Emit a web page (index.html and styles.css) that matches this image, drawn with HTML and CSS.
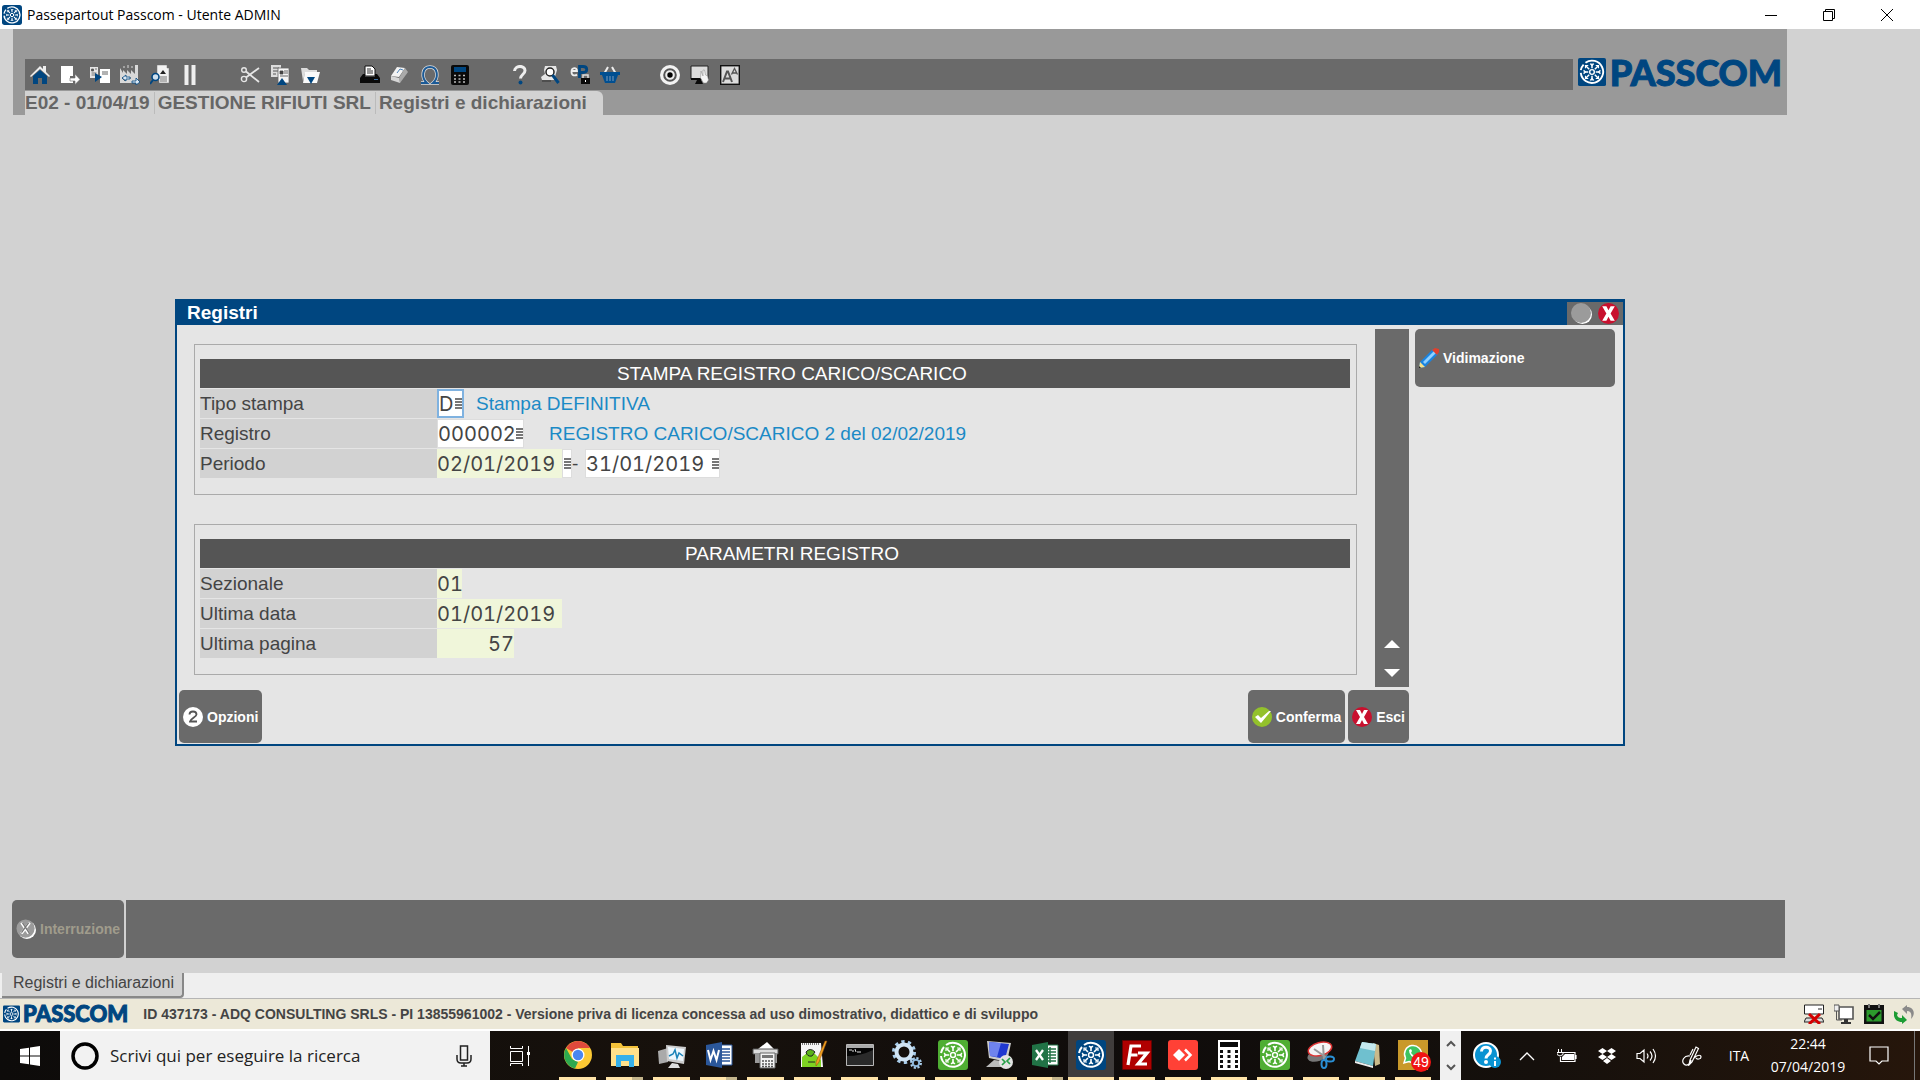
FILE: index.html
```html
<!DOCTYPE html>
<html lang="it">
<head>
    <meta charset="UTF-8">
    <meta name="viewport" content="width=device-width, initial-scale=1.0">
    <title>Passepartout Passcom - Utente ADMIN</title>
    <link rel="stylesheet" href="styles.css">
</head>
<body>
    <!-- shared icons -->
    <svg class="sprite" aria-hidden="true">
        <symbol id="wheel" viewBox="0 0 30 30">
            <g fill="none" stroke="#fff">
                <path d="M3 16a12 12 0 1 0 5-11" stroke-width="2"/>
                <path d="M3 13a12 12 0 0 1 3-6" stroke-width="2"/>
                <circle cx="15" cy="15" r="2.5" stroke-width="1.5"/>
                <path d="M15 11V6M15 19v5M11 15H6M19 15h5M12 12L8.500 8.500M18 18l3.500 3.500M18 12l3.500-3.500M12 18l-3.500 3.500" stroke-width="1.6"/>
                <path d="M13 6l2 2 2-2M13 24l2-2 2 2M6 13l2 2-2 2M24 13l-2 2 2 2M8 11V8h3M22 11V8h-3M8 19v3h3M22 19v3h-3" stroke-width="1.200"/>
            </g>
        </symbol>
        <symbol id="close-red" viewBox="0 0 20 20">
            <circle cx="10" cy="10" r="10" fill="#c8102e"/>
            <path d="M4 3h4l2 4 2-4h4l-4 7 4 7h-4l-2-4-2 4H4l4-7z" fill="#fff"/>
        </symbol>
        <symbol id="lines" viewBox="0 0 8 11">
            <path d="M1 1h7M1 4h7M1 7h7M1 10h7" stroke="#777" stroke-width="2"/>
        </symbol>
    </svg>

    <header class="titlebar">
        <svg class="app-icon" viewBox="0 0 30 30"><rect width="30" height="30" rx="4" fill="#004680"/><use href="#wheel"/></svg>
        <h1>Passepartout Passcom - Utente ADMIN</h1>
        <div class="window-buttons">
            <button aria-label="Riduci a icona"><svg width="12" height="12"><path d="M0 6.500h12" stroke="#000"/></svg></button>
            <button aria-label="Ripristina"><svg width="12" height="12" fill="none" stroke="#000"><path d="M.5 2.500h9v9h-9zM2.500 2.500v-2h9v9h-2"/></svg></button>
            <button aria-label="Chiudi"><svg width="12" height="12" stroke="#000"><path d="M0 0l12 12M12 0L0 12"/></svg></button>
        </div>
    </header>

    <main class="workspace">
        <div class="app-header">
            <div class="toolbar-row">
                <div class="toolbar">
                    <div class="tool-group">
                        <button aria-label="Home"><svg viewBox="0 0 20 20"><path d="M0 11L10 1l3 3V1h3v6l4 4-1 1-9-8-9 8z" fill="#eee"/><path d="M3 11l7-6 7 6v8h-5v-6H8v6H3z" fill="#004680"/></svg></button>
                        <button aria-label="Uscita"><svg viewBox="0 0 20 20"><path d="M1 1h12v10h-3v5h3v2H1z" fill="#fff"/><path d="M10 13h5v-4l5 5.500-5 5V16h-5z" fill="#fff" stroke="#6a6a6a" stroke-width=".6"/></svg></button>
                        <button aria-label="Cambio azienda"><svg viewBox="0 0 20 20"><path d="M0 2h8v11H0z" fill="#e6e6e6"/><path d="M1.500 4h2v2h-2zM5 4h2M1.500 8h5M1.500 10h5" fill="#555" stroke="#555" stroke-width=".8"/><path d="M10 4h10v14H10z" fill="#fff"/><path d="M12 7h6M12 9h6" stroke="#666"/><path d="M5 8l7 4-7 5z" fill="#004680"/></svg></button>
                        <button aria-label="Produzione"><svg viewBox="0 0 20 20"><path d="M0 18V3l3 5V5l4 4V5l4 4V5l4 4V0h3v18z" fill="#d9d9d9"/><path d="M4 3V1M8 3V0M12 3V1" stroke="#d9d9d9"/><path d="M2 13h3v3M8 13h3" stroke="#666"/><path d="M12 16h4v-3l4 4-4 3v-2h-4zM10 12H6v-2l-4 3 4 3v-2h4z" fill="#dce8f4" stroke="#004680" stroke-width=".8"/></svg></button>
                        <button aria-label="Anteprima"><svg viewBox="0 0 20 20"><path d="M7 0h10v3h2v15H9v-3H7z" fill="#f2f2f2" stroke="#777" stroke-width=".5"/><path d="M10 9l3-4 3 4z" fill="#222"/><path d="M10 12h7M10 14h7M10 16h7" stroke="#777"/><circle cx="5.500" cy="12" r="3.500" fill="#cfe0ee" stroke="#004680" stroke-width="1.600"/><path d="M3 15l-3 4" stroke="#004680" stroke-width="2"/></svg></button>
                        <button aria-label="Pausa"><svg viewBox="0 0 20 20"><path d="M4.500 0h4v20h-4zM11.500 0h4v20h-4z" fill="#eee"/></svg></button>
                    </div>
                    <div class="tool-group">
                        <button aria-label="Taglia"><svg viewBox="0 0 20 20" fill="none" stroke="#e6e6e6"><circle cx="4" cy="5" r="2.300" stroke-width="1.400"/><circle cx="4" cy="14" r="2.600" stroke-width="1.400"/><path d="M6 12.500L19 3M6 6.500L19 17" stroke-width="1.800"/></svg></button>
                        <button aria-label="Copia"><svg viewBox="0 0 20 20"><path d="M1 0h10v12H1z" fill="#ddd"/><path d="M3 3h6M3 6h6M3 9h3" stroke="#555"/><path d="M8 3h11v15H8z" fill="#f6f6f6" stroke="#666" stroke-width=".8"/><path d="M10 6h3v3h-3zM14 6h4M14 8h4M10 11h8" fill="#444" stroke="#444" stroke-width=".8"/><path d="M7 20l5-7 5 7z" fill="#004680"/></svg></button>
                        <button aria-label="Incolla"><svg viewBox="0 0 20 20"><path d="M1 3h6l2 2h8v3H5l-2 8z" fill="#ddd"/><path d="M5 7h15l-3 11H3z" fill="#fafafa"/><path d="M7 12h8l-4 7z" fill="#004680"/></svg></button>
                    </div>
                    <div class="tool-group">
                        <button aria-label="Stampa"><svg viewBox="0 0 20 20"><path d="M5 1h7l3 3v7H5z" fill="#fff" stroke="#111"/><path d="M7 4h4M7 6h6M7 8h6" stroke="#333"/><path d="M3 9h2v3h10V9h2l3 4v5H0v-5z" fill="#0a0a0a"/><path d="M14 14h4v1h-4z" fill="#3c6ea0"/></svg></button>
                        <button aria-label="Cancella"><svg viewBox="0 0 20 20"><path d="M7 2l8 1-6 9-8-1z" fill="#f3f3f3"/><path d="M15 3l3 4-8 11-1-5z" fill="#aaa"/><path d="M1 11l8 2 1 5-9-3z" fill="#d6d6d6"/><path d="M7 8l3-4 3 1" stroke="#4d83b8" fill="none"/></svg></button>
                        <button aria-label="Simboli"><svg viewBox="0 0 20 20"><path d="M1 18h6c-6-5-5-16 3-16s9 11 3 16h6" fill="none" stroke="#ddd" stroke-width="3.500"/><path d="M1 18h6c-6-5-5-16 3-16s9 11 3 16h6" fill="none" stroke="#1b5a96" stroke-width="2"/></svg></button>
                        <button aria-label="Calcolatrice"><svg viewBox="0 0 20 20"><rect x="1" width="18" height="20" rx="2" fill="#0a0a0a"/><path d="M4 2h12v5H4z" fill="#004680"/><path d="M4 10.500h12M4 14h12M4 17h12" stroke="#bbb" stroke-width="1.500" stroke-dasharray="2 2.500"/></svg></button>
                    </div>
                    <div class="tool-group">
                        <button aria-label="Aiuto"><svg viewBox="0 0 20 20"><path d="M4.500 6C5 0 15 0 15 5.500c0 4-4.500 4-4.500 8" fill="none" stroke="#eee" stroke-width="3"/><circle cx="10.500" cy="17.500" r="2" fill="#004680"/></svg></button>
                        <button aria-label="Ricerca"><svg viewBox="0 0 20 20"><path d="M5 1h11l1 4-3 10H2l-1-3 4-3-1-4z" fill="#e6e6e6"/><circle cx="10" cy="7" r="4" fill="#fff" stroke="#222" stroke-width="1.500"/><path d="M2 16h9" stroke="#333"/><path d="M12.500 10l6 8" stroke="#004680" stroke-width="3"/></svg></button>
                        <button aria-label="ePass"><svg viewBox="0 0 20 20"><path d="M1.500 6h5.500c0-4-5.500-4-5.500 1 0 4 4 4 5.500 2.500" fill="none" stroke="#eee" stroke-width="1.800"/><path d="M9.500 13V1.500H13c5 0 5 6 0 6H10" fill="none" stroke="#004680" stroke-width="2.800"/><rect x="11" y="13" width="9" height="6" fill="#0a0a0a"/><path d="M13 13v-3h5v3" fill="none" stroke="#ddd" stroke-width="1.500"/><path d="M15 15h1v2h-1z" fill="#fff"/></svg></button>
                        <button aria-label="Acquisti"><svg viewBox="0 0 20 20"><path d="M4 9l4-7M16 9l-4-7" stroke="#eee" stroke-width="2"/><path d="M0 7h20v3h-2l-3 8H5l-3-8H0z" fill="#004f91"/><path d="M7 11v5M10 11v5M13 11v5" stroke="#7f9cba"/></svg></button>
                    </div>
                    <div class="tool-group">
                        <button aria-label="Bersaglio"><svg viewBox="0 0 20 20"><circle cx="10" cy="10" r="10" fill="#f2f2f2"/><circle cx="10" cy="10" r="5.800" fill="#eee" stroke="#555" stroke-width="2"/><circle cx="10" cy="10" r="2.700" fill="#000"/></svg></button>
                        <button aria-label="Desktop"><svg viewBox="0 0 20 20"><path d="M1 1h17v13H1z" fill="#ddd" stroke="#222"/><path d="M1 13h12v2H1zM7 15h4l2 4H5z" fill="#0a0a0a"/><path d="M11 6l2 5V5h1.500l1 5 2 1 1 4-2 3h-3l-3-5z" fill="#f4f4f4" stroke="#888" stroke-width=".5"/></svg></button>
                        <button aria-label="Caratteri"><svg viewBox="0 0 20 20"><rect x=".7" y=".7" width="18.600" height="18.600" fill="#ddd" stroke="#111" stroke-width="1.400"/><path d="M3 17L7 6.500h1L12 17M4.500 13.500h6" fill="none" stroke="#555" stroke-width="2"/><path d="M11.500 9.500l3-6 3 6M12.500 8h4" fill="none" stroke="#555" stroke-width="1.300"/></svg></button>
                    </div>
                </div>
                <div class="brand">
                    <svg viewBox="0 0 30 30"><rect width="30" height="30" rx="2" fill="#004680"/><use href="#wheel"/></svg>
                    <span>PASSCOM</span>
                </div>
            </div>
            <nav class="breadcrumb">
                <span>E02 - 01/04/19</span>
                <span>GESTIONE RIFIUTI SRL</span>
                <span>Registri e dichiarazioni</span>
            </nav>
        </div>

        <section class="dialog">
            <div class="dialog-title">
                <h2>Registri</h2>
                <div class="dialog-buttons">
                    <button aria-label="Riduci"><svg viewBox="0 0 22 22"><circle cx="12" cy="12" r="10" fill="#fff"/><circle cx="10.500" cy="10.500" r="10.500" fill="#9b9b9b"/></svg></button>
                    <button aria-label="Chiudi"><svg viewBox="0 0 20 20"><use href="#close-red"/></svg></button>
                </div>
            </div>
            <div class="dialog-body">
                <form class="dialog-main">
                    <div class="form-area">
                        <div class="panels">
                            <div class="panel">
                                <h3>STAMPA REGISTRO CARICO/SCARICO</h3>
                                <div class="row">
                                    <label for="tipo">Tipo stampa</label>
                                    <div class="field active"><input id="tipo" class="w-1" value="D"><svg class="menu"><use href="#lines"/></svg></div>
                                    <span class="note">Stampa DEFINITIVA</span>
                                </div>
                                <div class="row">
                                    <label for="registro">Registro</label>
                                    <div class="field"><input id="registro" class="w-6" value="000002"><svg class="menu"><use href="#lines"/></svg></div>
                                    <span class="note wide">REGISTRO CARICO/SCARICO 2 del 02/02/2019</span>
                                </div>
                                <div class="row">
                                    <label for="dal">Periodo</label>
                                    <input id="dal" class="w-10 locked" value="02/01/2019" readonly>
                                    <div class="field"><svg class="menu"><use href="#lines"/></svg></div>
                                    <label class="dash" for="al">-</label>
                                    <div class="field"><input id="al" class="w-10" value="31/01/2019"><svg class="menu"><use href="#lines"/></svg></div>
                                </div>
                            </div>
                            <div class="panel">
                                <h3>PARAMETRI REGISTRO</h3>
                                <div class="row">
                                    <label for="sezionale">Sezionale</label>
                                    <input id="sezionale" class="w-2 locked" value="01" readonly>
                                </div>
                                <div class="row">
                                    <label for="ultima-data">Ultima data</label>
                                    <input id="ultima-data" class="w-10 locked" value="01/01/2019" readonly>
                                </div>
                                <div class="row">
                                    <label for="ultima-pagina">Ultima pagina</label>
                                    <input id="ultima-pagina" class="w-6 locked number" value="57" readonly>
                                </div>
                            </div>
                        </div>
                        <div class="scroller">
                            <button type="button" aria-label="Su"><svg width="16" height="8"><path d="M0 8l8-8 8 8z" fill="#fff"/></svg></button>
                            <button type="button" aria-label="Giù"><svg width="16" height="8"><path d="M0 0h16l-8 8z" fill="#fff"/></svg></button>
                        </div>
                    </div>
                    <div class="actions">
                        <button type="button" class="btn"><svg viewBox="0 0 20 20"><circle cx="10" cy="10" r="10" fill="#fff"/><path d="M6.500 7.500c0-4 7-4 7 0 0 2.500-6 4-6.500 7h7" fill="none" stroke="#555" stroke-width="1.800"/></svg>Opzioni</button>
                        <button type="button" class="btn confirm"><svg viewBox="0 0 20 20"><circle cx="10" cy="10" r="10" fill="#93c12c"/><path d="M3 10l3-2 3 3 8-7h2L9 16z" fill="#fff"/></svg>Conferma</button>
                        <button type="button" class="btn"><svg viewBox="0 0 20 20"><use href="#close-red"/></svg>Esci</button>
                    </div>
                </form>
                <aside class="side">
                    <button class="btn"><svg viewBox="0 0 20 20"><path d="M0 20l1-6L14 1l5 5L6 19z" fill="#1a84e0"/><path d="M4 14L15 3l2 2L6 16z" fill="#8fd0ff"/><path d="M0 20l1-6 5 5z" fill="#f7e08a"/><path d="M0 20v-2l2 2z" fill="#222"/><path d="M13 2l3-2 4 1v3l-2 3z" fill="#e0402c"/></svg>Vidimazione</button>
                </aside>
            </div>
        </section>

        <div class="command-bar">
            <button class="btn" disabled><svg viewBox="0 0 22 22"><circle cx="12" cy="12" r="10" fill="#fff"/><circle cx="10.500" cy="10.500" r="10" fill="#9b9b9b"/><path d="M6 4l8 12M15 4L6 16" stroke="#fff" stroke-width="3"/><path d="M7 4l8 12M14 4L6 15" stroke="#777" stroke-width="1.500"/></svg>Interruzione</button>
            <div class="command-fill"></div>
        </div>
    </main>

    <div class="window-tabs">
        <a href="#" class="window-tab">Registri e dichiarazioni</a>
    </div>

    <div class="status-bar">
        <div class="brand small">
            <svg viewBox="0 0 30 30"><rect width="30" height="30" rx="2" fill="#004680"/><use href="#wheel"/></svg>
            <span>PASSCOM</span>
        </div>
        <p>ID 437173 - ADQ CONSULTING SRLS - PI 13855961002 - Versione priva di licenza concessa ad uso dimostrativo, didattico e di sviluppo</p>
        <div class="status-icons">
            <svg viewBox="0 0 20 20"><path d="M.5 1h19v9H.5z" fill="#fff" stroke="#222"/><path d="M14 5h4M2 14h16l2 4H0z" stroke="#222" fill="#ddd"/><path d="M5 10l11 10M16 10L5 20" stroke="#d40000" stroke-width="3"/></svg>
            <svg viewBox="0 0 20 20"><path d="M5 3h14v12H5z" fill="#fff" stroke="#555" stroke-width="1.600"/><path d="M0 1h5v6H0z" fill="#eee" stroke="#555"/><path d="M2.500 7v9H8" fill="none" stroke="#555"/><path d="M10 15h4v3h3v2H7v-2h3z" fill="#333"/></svg>
            <svg viewBox="0 0 20 20"><rect y="1" width="20" height="19" fill="#111"/><rect x="2.500" y="6" width="15" height="11.500" fill="#2c9a2c"/><path d="M5 0v4M15 0v4" stroke="#777" stroke-width="2"/><path d="M5 11l4 4 7-7" fill="none" stroke="#111" stroke-width="2.500"/></svg>
            <svg viewBox="0 0 20 20"><path d="M0 7l4 2-1 2c1 3 3 3 5 3v-3l5 5-5 4v-2c-6 0-9-4-8-11z" fill="#1c9c33"/><path d="M17 15c1-5 0-8-4-8v3L8 5l5-4v2c7 0 9 7 4 12z" fill="#8a8a8a"/></svg>
        </div>
    </div>

    <footer class="taskbar">
        <button class="start" aria-label="Start"><svg width="20" height="20"><path d="M0 3l9-1.300V9.500H0zM10 1.500L20 0v9.500H10zM0 10.500h9v7.800L0 17zM10 10.500h10V20l-10-1.500z" fill="#fff"/></svg></button>
        <div class="search">
            <svg width="28" height="28"><circle cx="14" cy="14" r="12" fill="none" stroke="#000" stroke-width="3.500"/></svg>
            <input type="text" aria-label="Ricerca" placeholder="Scrivi qui per eseguire la ricerca">
            <svg width="16" height="22" fill="none" stroke="#222" stroke-width="1.500"><rect x="4.500" y="1" width="7" height="14"/><path d="M1 10v4q0 4 4 4h6q4 0 4-4v-4M8 18v3M5 21h6"/></svg>
        </div>
        <button class="task-view" aria-label="Visualizzazione attività"><svg width="22" height="20" fill="none" stroke="#fff"><path d="M1.500 5.500h12v10h-12zM1.500 0v2.500h12V0M1.500 20v-2.500h12V20M19.500 0v20"/><path d="M18 6h3v3h-3z" fill="#fff" stroke="none"/></svg></button>

        <div class="apps">
            <button aria-label="Chrome"><svg viewBox="0 0 30 30"><circle cx="15" cy="15" r="14" fill="#fcc934"/><path d="M15 15L3 8a14 14 0 0 1 24.200 0H15z" fill="#e04a3c"/><path d="M3 8l6 11 6 3-3 6.600A14 14 0 0 1 3 8z" fill="#2da94f"/><circle cx="15" cy="15" r="6.500" fill="#fff"/><circle cx="15" cy="15" r="5.200" fill="#4a86f0"/></svg></button>
            <button class="multi" aria-label="Esplora file"><svg viewBox="0 0 30 30"><path d="M1 3h10l2 3h15v20H1z" fill="#f3c23a"/><path d="M1 8h28v18H1z" fill="#ffe18b"/><path d="M6 27V15h18v12h-5v-6h-8v6z" fill="#35b0ea"/></svg></button>
            <button aria-label="Monitor di sistema"><svg viewBox="0 0 30 30"><path d="M1 11l10-3v14l-9 2z" fill="#aaa"/><path d="M9 5l20 2-2 17-17-3z" fill="#ccc"/><path d="M11 7l16 2-1 12-14-2z" fill="#eef7fd"/><path d="M12 16l4-2 2-4 2 8 2-5 4 3" fill="none" stroke="#1b83b9" stroke-width="1.500"/><path d="M15 23l6 1 2 4H11z" fill="#ddd"/></svg></button>
            <button class="multi" aria-label="Word"><svg viewBox="0 0 30 30"><path d="M14 5h14v20H14z" fill="#fff" stroke="#2b579a"/><path d="M17 9h9M17 12h9M17 15h9M17 18h9M17 21h9" stroke="#2b579a" stroke-width="1.300"/><path d="M2 5l16-3v26L2 25z" fill="#2b579a"/><path d="M4 10l2.500 10L9.500 11l3 9L15 10" fill="none" stroke="#fff" stroke-width="2"/></svg></button>
            <button aria-label="Contabilità"><svg viewBox="0 0 30 30"><path d="M7 9l9-7 8 8z" fill="#fff"/><path d="M2 9h25v5H2z" fill="#ddd" stroke="#555"/><path d="M4 14h22v9H4z" fill="#999"/><path d="M9 13h15v15H9z" fill="#f4f4f4" stroke="#666"/><path d="M11 15h11v3H11z" fill="#777"/><path d="M11 21h11M11 24h11M11 26.500h11" stroke="#555" stroke-width="1.500" stroke-dasharray="2 1"/></svg></button>
            <button aria-label="Notepad++"><svg viewBox="0 0 30 30"><path d="M3 3h20l2 24H3z" fill="#f5f5f5"/><path d="M4 4h18" stroke="#777" stroke-width="2" stroke-dasharray="1 1"/><path d="M4 17l5-4 8 1 6 6v7H4z" fill="#7ed321"/><path d="M8 12q4-5 9 0l-3 4q-5 1-6-4zM10 22h7" fill="#5bb31a" stroke="#222"/><path d="M29 1L21 22l-3 4v-4L27 1z" fill="#f0a020" stroke="#8a4a10" stroke-width=".5"/></svg></button>
            <button aria-label="Prompt dei comandi"><svg viewBox="0 0 30 30"><path d="M1.500 4.500h27v21h-27z" fill="#050505" stroke="#b8b8b8"/><path d="M2 5h26v3H2z" fill="#aaa"/><path d="M4 10h3M8 10v2M10 9l1 3M12 12h4" stroke="#ddd"/><path d="M2 25V16q14 0 26-6v15z" fill="#2a2a2a"/></svg></button>
            <button aria-label="Servizi"><svg viewBox="0 0 30 30" fill="none"><circle cx="12" cy="12" r="9.500" stroke="#a9cdea" stroke-width="5" stroke-dasharray="3 3"/><circle cx="12" cy="12" r="7.500" stroke="#cfe3f3" stroke-width="4"/><circle cx="24" cy="23" r="4.500" stroke="#a9cdea" stroke-width="3" stroke-dasharray="2 1.500"/><circle cx="24" cy="23" r="3.200" stroke="#8db7da" stroke-width="2"/></svg></button>
            <button aria-label="Passepartout"><svg viewBox="0 0 30 30"><rect width="30" height="30" rx="3" fill="#4fae33"/><use href="#wheel"/></svg></button>
            <button aria-label="Desktop remoto"><svg viewBox="0 0 30 30"><path d="M3 1l24 2-4 19L5 18z" fill="#ccc"/><path d="M5 2l20 2-4 15L6 16z" fill="#1f38d0"/><path d="M5 2l12 1-4 14-7-1z" fill="#6f83ee"/><path d="M10 20l8 1 2 6H2z" fill="#bbb"/><circle cx="22" cy="22" r="7" fill="#e3e3e3"/><path d="M18 19l3 3-3 3M26 18l-3 3 3 3" fill="none" stroke="#27a048" stroke-width="1.700"/></svg></button>
            <button class="multi" aria-label="Excel"><svg viewBox="0 0 30 30"><path d="M14 5h14v20H14z" fill="#fff" stroke="#217346"/><path d="M20 7v16M17 9h9M17 12h9M17 15h9M17 18h9M17 21h9" stroke="#217346" stroke-width="1.500"/><path d="M2 5l16-3v26L2 25z" fill="#217346"/><path d="M6 10l7 10M13 10L6 20" stroke="#fff" stroke-width="2.300"/></svg></button>
            <button class="current" aria-label="Passcom"><svg viewBox="0 0 30 30"><rect width="30" height="30" rx="3" fill="#004680"/><use href="#wheel"/></svg></button>
            <button aria-label="FileZilla"><svg viewBox="0 0 30 30"><rect x=".5" y=".5" width="29" height="29" fill="#b00000" stroke="#600" stroke-dasharray="2 1"/><path d="M6 25L9 6h10M7.500 15h8M16 13h9l-9 11h9" fill="none" stroke="#fff" stroke-width="3.200"/></svg></button>
            <button aria-label="AnyDesk"><svg viewBox="0 0 30 30"><rect width="30" height="30" rx="3" fill="#ff4136"/><path d="M11 9l6 6-6 6-6-6z" fill="#fff"/><path d="M17 9.500l5.500 5.500-5.500 5.500" fill="none" stroke="#fff" stroke-width="2.500"/></svg></button>
            <button aria-label="Calcolatrice"><svg viewBox="0 0 30 30"><path d="M4 0h22v30H4z" fill="#fff"/><path d="M6 2h18v5H6z" fill="#0a0a0a"/><path d="M6 11.500h18M6 16.500h18M6 21.500h18M6 26.500h18" stroke="#111" stroke-width="3" stroke-dasharray="3 4.500"/></svg></button>
            <button aria-label="Passepartout 2"><svg viewBox="0 0 30 30"><rect width="30" height="30" rx="3" fill="#4fae33"/><use href="#wheel"/></svg></button>
            <button aria-label="Strumento di cattura"><svg viewBox="0 0 30 30"><ellipse cx="12" cy="15" rx="11" ry="6" fill="#777" transform="rotate(-20 12 15)"/><ellipse cx="14" cy="9" rx="12" ry="6.500" fill="#f4f4f4" stroke="#d33" stroke-width="1.500" transform="rotate(-15 14 9)"/><path d="M8 9l13 9M17 5l1 15" stroke="#999" stroke-width="2"/><ellipse cx="24" cy="19" rx="4" ry="2.500" fill="none" stroke="#2a8fd4" stroke-width="2"/><ellipse cx="18" cy="24" rx="2.500" ry="4" fill="none" stroke="#2a8fd4" stroke-width="2"/></svg></button>
            <button aria-label="Blocco note"><svg viewBox="0 0 30 30"><path d="M21 3l6 2 1 19-5 2z" fill="#c9b98a"/><path d="M10 2l14 2-3 22-18-5z" fill="#6fc0cf"/><path d="M10 2l14 2-1 7-15-3z" fill="#c4e9ef"/><path d="M3 21l18 5v2L3 23z" fill="#eee"/></svg></button>
            <button aria-label="WhatsApp"><svg viewBox="0 0 30 30"><rect width="30" height="30" fill="#c9992a"/><path d="M6 23l1.500-5A8.500 8.500 0 1 1 11 21.500z" fill="#3fc35f" stroke="#fff" stroke-width="1.500"/><path d="M11 10q0 7 8 8l1-2-3-1-1 1-3-3 1-2-1-2z" fill="#fff"/></svg><span class="badge">49</span></button>
        </div>

        <div class="app-scroll">
            <button aria-label="Scorri su"><svg width="10" height="7" fill="none" stroke="#555" stroke-width="2"><path d="M1 6l4-4 4 4"/></svg></button>
            <button aria-label="Scorri giù"><svg width="10" height="7" fill="none" stroke="#555" stroke-width="2"><path d="M1 1l4 4 4-4"/></svg></button>
        </div>

        <div class="tray">
            <button class="tray-wide" aria-label="Assistenza"><svg width="30" height="28"><circle cx="14" cy="13" r="12" fill="#0a93d2" stroke="#fff" stroke-width="2"/><path d="M9.500 9.500c0-6 9-5.500 9-.5 0 4-4.500 3.500-4.500 7.500" fill="none" stroke="#fff" stroke-width="3"/><circle cx="14" cy="20" r="2" fill="#fff"/><circle cx="23" cy="20" r="6" fill="#0a93d2"/><path d="M23 19v5M23 15.500v2" stroke="#fff" stroke-width="2"/></svg></button>
            <button class="tray-slim" aria-label="Icone nascoste"><svg width="16" height="10" fill="none" stroke="#fff" stroke-width="1.300"><path d="M1 9l7-7 7 7"/></svg></button>
            <button class="tray-wide" aria-label="Batteria"><svg width="20" height="14" fill="none" stroke="#fff"><path d="M6 3.500h12v9H3.500V8M19 6v4" stroke-width="1.200"/><path d="M8 5h9v6H5V8z" fill="#fff" stroke="none"/><path d="M1.500 0v3M4.500 0v3M0 3.500h6v2L3 7 0 5.500z"/></svg></button>
            <button class="tray-slim" aria-label="Dropbox"><svg width="18" height="16" fill="#fff"><path d="M4.500 0L9 3 4.500 6 0 3zM13.500 0L18 3l-4.500 3L9 3zM4.500 6L9 9l-4.500 3L0 9zM13.500 6L18 9l-4.500 3L9 9zM9 10l4 3-4 3-4-3z"/></svg></button>
            <button class="tray-wide" aria-label="Volume"><svg width="22" height="16" fill="none" stroke="#fff" stroke-width="1.200"><path d="M1 5.500h3L8 2v12l-4-3.500H1zM11 5.500q2 2.500 0 5M14 3.500q4 4.500 0 9M17 1q5 7 0 14"/></svg></button>
            <button class="tray-pen" aria-label="Penna"><svg width="20" height="20" fill="none" stroke="#fff" stroke-width="1.200"><path d="M8 14L14 1l2.500 1.500L10 16l-3 3zM8 10C2 9-1 15 2 18s7-1 7-4M12 12c4-4 7-3 7-1s-4 3-5 1M11 3l-3 6"/></svg></button>
            <button class="tray-lang">ITA</button>
            <button class="clock"><time>22:44</time><time>07/04/2019</time></button>
            <button class="tray-notes" aria-label="Notifiche"><svg width="20" height="20" fill="none" stroke="#fff" stroke-width="1.200"><path d="M1 1h18v14h-6l-3 3-3-3H1z"/></svg></button>
        </div>
    </footer>
</body>
</html>
```

FILE: styles.css
```css
:root {
    --blue: #004680;
    --page-bg: #d2d2d2;
    --bar-bg: #6a6a6a;
    --dialog-bg: #e5e5e5;
    --header-bg: #999999;
    --locked-bg: #f0f6da;
    --note-color: #1b8ac6;
}

* {
    box-sizing: border-box;
    margin: 0;
    padding: 0;
}

body {
    display: flex;
    flex-direction: column;
    min-height: 100vh;
    background-color: var(--page-bg);
    font-family: "Liberation Sans", Arial, sans-serif;
    font-size: 19px;
    color: #444;
}

button {
    border: none;
    background: none;
    font-family: inherit;
    color: inherit;
    cursor: pointer;
}

svg {
    display: block;
    flex: none;
}

.sprite {
    position: absolute;
    width: 0;
    height: 0;
}

/* window title */
.titlebar {
    display: flex;
    align-items: center;
    height: 29px;
    padding-left: 2px;
    background-color: #fff;
}

.app-icon {
    width: 20px;
    height: 20px;
}

.titlebar h1 {
    flex: 1;
    margin-left: 5px;
    font-family: "Open Sans", sans-serif;
    font-size: 14px;
    font-weight: 400;
    color: #000;
}

.window-buttons {
    display: flex;
    padding-right: 4px;
}

.window-buttons button {
    display: grid;
    place-items: center;
    width: 58px;
    height: 28px;
}

.workspace {
    display: flex;
    flex: 1;
    flex-direction: column;
}

/* header and toolbar */
.app-header {
    margin: 0 133px 0 13px;
    padding: 30px 0 0 12px;
    background-color: var(--header-bg);
}

.toolbar-row {
    display: flex;
    height: 31px;
}

.toolbar {
    display: flex;
    flex: 1;
    align-items: center;
    gap: 30px;
    background-color: var(--bar-bg);
}

.tool-group {
    display: flex;
}

.tool-group button {
    display: grid;
    place-items: center;
    width: 30px;
    height: 30px;
}

.tool-group svg {
    width: 20px;
    height: 20px;
}

.brand {
    display: flex;
    align-items: center;
    gap: 4px;
    height: 26px;
    padding: 0 5px;
    color: var(--blue);
    font-family: Lato, sans-serif;
    font-size: 36px;
    font-weight: 900;
    line-height: 26px;
    -webkit-text-stroke: 1px var(--blue);
}

.brand svg {
    width: 28px;
    height: 28px;
}

.breadcrumb {
    display: flex;
    align-items: center;
    width: max-content;
    height: 24px;
    margin-top: 1px;
    padding-right: 16px;
    border-top-right-radius: 6px;
    background-color: var(--page-bg);
    font-weight: bold;
    line-height: 22px;
    color: #666;
}

.breadcrumb span + span {
    margin-left: 4px;
    padding-left: 3px;
    border-left: 1px solid #bbb;
}

/* dialog */
.dialog {
    margin: 184px 295px 20px 175px;
    border: 2px solid var(--blue);
    background-color: var(--dialog-bg);
}

.dialog-title {
    display: flex;
    align-items: center;
    justify-content: space-between;
    height: 24px;
    padding-left: 10px;
    background-color: var(--blue);
    color: #fff;
}

.dialog-title h2 {
    font-size: 19px;
    line-height: 22px;
}

.dialog-buttons {
    display: flex;
    gap: 6px;
    padding: 1px 4px;
    background-color: var(--bar-bg);
}

.dialog-buttons svg {
    width: 21px;
    height: 21px;
}

.dialog-body {
    display: flex;
    gap: 6px;
    padding: 4px 8px 1px 0;
}

.dialog-main {
    flex: 1;
}

.form-area {
    display: flex;
    gap: 18px;
    padding-left: 17px;
}

.panels {
    flex: 1;
    padding: 15px 0 12px;
}

.panel {
    padding: 14px 6px 16px 5px;
    border: 1px solid #aaa;
}

.panel + .panel {
    margin-top: 29px;
}

.panel h3 {
    height: 29px;
    padding-left: 34px;
    background-color: #555;
    color: #fff;
    font-size: 19px;
    font-weight: 400;
    line-height: 29px;
    text-align: center;
}

.row {
    display: flex;
    align-items: center;
    height: 29px;
    margin-top: 1px;
    line-height: 29px;
}

.row label {
    width: 237px;
    background-color: var(--page-bg);
}

.row .dash {
    width: 13px;
    background: none;
}

.row input {
    height: 27px;
    border: none;
    outline: none;
    background-color: transparent;
    font-family: Inter, sans-serif;
    font-size: 20px;
    font-variant-numeric: tabular-nums;
    color: #444;
}

.row .w-1 {
    width: 15px;
}

.row .w-2 {
    width: 25px;
}

.row .w-6 {
    width: 77px;
}

.row .w-10 {
    width: 125px;
}

.row .locked {
    height: 29px;
    background-color: var(--locked-bg);
}

.row .number {
    text-align: right;
}

.field {
    display: flex;
    align-items: center;
    height: 29px;
    border: 1px solid #ddd;
    background-color: #fff;
}

.field.active {
    border: 2px solid #7fb2e0;
}

.menu {
    width: 8px;
    height: 11px;
}

.note {
    margin-left: 12px;
    color: var(--note-color);
}

.note.wide {
    margin-left: 25px;
}

.scroller {
    display: flex;
    flex-direction: column;
    justify-content: flex-end;
    width: 34px;
    background-color: var(--bar-bg);
}

.scroller button {
    display: grid;
    place-items: center;
    height: 29px;
}

.btn {
    display: flex;
    align-items: center;
    gap: 4px;
    height: 53px;
    padding: 0 4px;
    border-radius: 5px;
    background-color: var(--bar-bg);
    color: #fff;
    font-size: 14px;
    font-weight: bold;
}

.btn svg {
    width: 20px;
    height: 20px;
}

.actions {
    display: flex;
    gap: 3px;
    padding: 3px 0 0 2px;
}

.actions .confirm {
    margin-left: auto;
}

.side {
    width: 200px;
}

.side .btn {
    width: 100%;
    height: 58px;
}

.command-bar {
    display: flex;
    gap: 2px;
    margin: auto 135px 15px 12px;
}

.command-bar .btn {
    height: 58px;
    color: #a09c8c;
    cursor: default;
}

.command-fill {
    flex: 1;
    background-color: var(--bar-bg);
}

/* window tabs and status */
.window-tabs {
    display: flex;
    height: 25px;
    padding-left: 2px;
    background-color: #efefef;
}

.window-tab {
    padding: 0 8px 0 11px;
    border-right: 2px solid #888;
    border-bottom: 2px solid #888;
    border-bottom-right-radius: 4px;
    background-color: var(--page-bg);
    color: #444;
    font-size: 16px;
    line-height: 20px;
    text-decoration: none;
}

.status-bar {
    display: flex;
    align-items: center;
    height: 33px;
    border-top: 1px solid #b5b5b5;
    border-bottom: 2px solid #fff;
    background-color: #ece8d8;
}

.brand.small {
    gap: 3px;
    height: 20px;
    padding: 0 15px 0 3px;
    font-size: 22px;
    line-height: 20px;
}

.brand.small svg {
    width: 17px;
    height: 18px;
}

.status-bar p {
    flex: 1;
    font-size: 14px;
    font-weight: bold;
}

.status-icons {
    display: flex;
    gap: 10px;
    padding-right: 6px;
}

.status-icons svg {
    width: 20px;
    height: 20px;
}

/* taskbar */
.taskbar {
    display: flex;
    height: 49px;
    background: linear-gradient(90deg, #0d0b0a, #17110c 35%, #0f0c0b 60%, #15100c 80%, #26160b);
    color: #fff;
    font-family: "Open Sans", sans-serif;
}

.taskbar button {
    display: grid;
    place-items: center;
}

.start {
    width: 60px;
}

.search {
    display: flex;
    align-items: center;
    width: 430px;
    padding: 0 18px 0 11px;
    background-color: #f2f2f2;
}

.search input {
    flex: 1;
    min-width: 0;
    margin-left: 11px;
    border: none;
    background: none;
    font-family: inherit;
    font-size: 17px;
}

.search input::placeholder {
    color: #222;
    opacity: 1;
}

.task-view {
    width: 64px;
    padding-right: 4px;
}

.apps {
    display: flex;
    flex: 1;
    padding-right: 4px;
}

.apps button {
    position: relative;
    flex: 46;
    padding-bottom: 1px;
}

.apps button:nth-child(-n+8) {
    flex: 47;
}

.apps svg {
    width: 30px;
    height: 30px;
}

.apps button::after {
    content: "";
    position: absolute;
    right: 5px;
    bottom: 0;
    left: 5px;
    height: 3px;
    background-color: #ffe4a9;
}

.apps .multi::after {
    background: linear-gradient(90deg, #ffe4a9 70%, #c4b58c 70%);
}

.apps .current {
    background-color: #403d3c;
}

.apps .current::after {
    right: 0;
    left: 0;
}

.badge {
    position: absolute;
    right: 5px;
    bottom: 8px;
    width: 20px;
    height: 20px;
    border-radius: 50%;
    background-color: #f01414;
    font-family: "Liberation Sans", sans-serif;
    font-size: 14px;
    line-height: 20px;
}

.app-scroll {
    display: flex;
    flex-direction: column;
    width: 21px;
    background-color: #f0f0f0;
}

.app-scroll button {
    flex: 1;
}

.tray {
    display: flex;
    padding-right: 5px;
}

.tray::after {
    content: "";
    margin-left: 5px;
    border-left: 1px solid #777;
}

.tray-wide {
    width: 52px;
}

.tray-slim {
    width: 28px;
}

.tray-pen {
    width: 38px;
}

.tray-lang {
    width: 56px;
    font-size: 14px;
}

.tray .clock {
    align-content: center;
    gap: 3px;
    width: 82px;
    font-size: 14px;
    line-height: 20px;
}

.tray-notes {
    width: 60px;
}
```
